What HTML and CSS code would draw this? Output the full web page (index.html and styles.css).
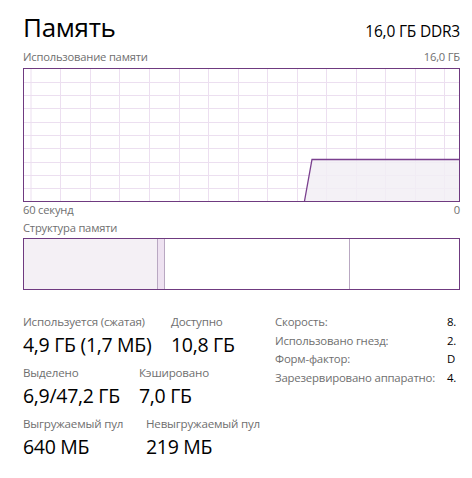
FILE: index.html
```html
<!DOCTYPE html>
<html lang="ru">
<head>
<meta charset="utf-8">
<link rel="stylesheet" href="styles.css">
</head>
<body>
<div class="page">
  <div class="header">
    <div class="title">Память</div>
    <div class="spec">16,0 ГБ DDR3</div>
  </div>
  <div class="caption-row top"><span>Использование памяти</span><span>16,0 ГБ</span></div>
  <div class="graph">
    <svg width="435" height="132" viewBox="0 0 435 132">
      <g stroke="#ecdff0" stroke-width="1">
        <line x1="7" y1="0" x2="7" y2="132"/><line x1="36.5" y1="0" x2="36.5" y2="132"/><line x1="66.5" y1="0" x2="66.5" y2="132"/><line x1="95.5" y1="0" x2="95.5" y2="132"/><line x1="125.5" y1="0" x2="125.5" y2="132"/><line x1="155.5" y1="0" x2="155.5" y2="132"/><line x1="184.5" y1="0" x2="184.5" y2="132"/><line x1="214.5" y1="0" x2="214.5" y2="132"/><line x1="243.5" y1="0" x2="243.5" y2="132"/><line x1="273.5" y1="0" x2="273.5" y2="132"/><line x1="302.5" y1="0" x2="302.5" y2="132"/><line x1="332.5" y1="0" x2="332.5" y2="132"/><line x1="361.5" y1="0" x2="361.5" y2="132"/><line x1="391.5" y1="0" x2="391.5" y2="132"/><line x1="420.5" y1="0" x2="420.5" y2="132"/>
        <line x1="0" y1="13.5" x2="435" y2="13.5"/><line x1="0" y1="26.5" x2="435" y2="26.5"/><line x1="0" y1="39.5" x2="435" y2="39.5"/><line x1="0" y1="53.5" x2="435" y2="53.5"/><line x1="0" y1="66.5" x2="435" y2="66.5"/><line x1="0" y1="79.5" x2="435" y2="79.5"/><line x1="0" y1="93.5" x2="435" y2="93.5"/><line x1="0" y1="106.5" x2="435" y2="106.5"/><line x1="0" y1="119.5" x2="435" y2="119.5"/>
      </g>
      <polygon points="280.5,132 288,90.5 435,90.5 435,132" fill="#f2eef4" fill-opacity="0.85"/>
      <polyline points="280.5,132 288,90.5 435,90.5" fill="none" stroke="#7a3f8e" stroke-width="1.3"/>
    </svg>
  </div>
  <div class="caption-row bottom"><span>60 секунд</span><span>0</span></div>
  <div class="caption-row struct"><span>Структура памяти</span></div>
  <div class="composition">
    <div class="seg inuse"></div>
    <div class="seg modified"></div>
    <div class="seg standby"></div>
    <div class="seg free"></div>
  </div>
  <div class="details">
    <div class="stats">
      <div class="stat-row">
        <div class="stat w1"><div class="label">Используется (сжатая)</div><div class="value">4,9 ГБ (1,7 МБ)</div></div>
        <div class="stat"><div class="label">Доступно</div><div class="value">10,8 ГБ</div></div>
      </div>
      <div class="stat-row">
        <div class="stat w2"><div class="label">Выделено</div><div class="value">6,9/47,2 ГБ</div></div>
        <div class="stat"><div class="label">Кэшировано</div><div class="value">7,0 ГБ</div></div>
      </div>
      <div class="stat-row">
        <div class="stat w3"><div class="label">Выгружаемый пул</div><div class="value">640 МБ</div></div>
        <div class="stat"><div class="label">Невыгружаемый пул</div><div class="value">219 МБ</div></div>
      </div>
    </div>
    <div class="props">
      <div class="prop"><span class="pname">Скорость:</span><span class="pval">8.</span></div>
      <div class="prop"><span class="pname">Использовано гнезд:</span><span class="pval">2.</span></div>
      <div class="prop"><span class="pname">Форм-фактор:</span><span class="pval">D</span></div>
      <div class="prop"><span class="pname">Зарезервировано аппаратно:</span><span class="pval">4.</span></div>
    </div>
  </div>
</div>
</body>
</html>
```
FILE: styles.css
```css
html, body {
  margin: 0;
  padding: 0;
  background: #ffffff;
}
body {
  font-family: "Open Sans", "Noto Sans", "Liberation Sans", sans-serif;
  color: #000;
  overflow: hidden;
}
.page {
  width: 437px;
  padding-left: 23px;
  padding-top: 8px;
}
.header {
  display: flex;
  justify-content: space-between;
  align-items: baseline;
  height: 38px;
}
.title {
  font-size: 26px;
  letter-spacing: -0.3px;
  line-height: 38px;
}
.spec {
  font-size: 15.5px;
  letter-spacing: -0.2px;
}
.caption-row {
  display: flex;
  justify-content: space-between;
  font-size: 11.2px;
  color: #6f6f6f;
  letter-spacing: -0.2px;
  line-height: 14px;
}
.caption-row.top { height: 18px; margin-top: 4px; }
.caption-row.bottom { margin-top: 1px; height: 16px; }
.caption-row.struct { margin-top: 2px; height: 17px; }
.graph {
  border: 1px solid #6f3a80;
  height: 132px;
  line-height: 0;
}
.graph svg { display: block; }
.composition {
  display: flex;
  border: 1px solid #6f3a80;
  height: 50px;
}
.seg { height: 100%; }
.inuse { width: 133px; background: #f4f0f5; }
.modified { width: 6px; background: #eee2f1; border-left: 1px solid #b9a8c2; border-right: 1px solid #b9a8c2; }
.standby { width: 184px; background: #fff; border-right: 1px solid #b9a8c2; }
.free { flex: 1; background: #fff; }
.details {
  display: flex;
  margin-top: 24px;
}
.stats {
  width: 252px;
}
.stat-row {
  display: flex;
  height: 51px;
}
.w1 { width: 148px; }
.w2 { width: 116px; }
.w3 { width: 123px; }
.label {
  font-size: 11.6px;
  color: #6f6f6f;
  letter-spacing: -0.2px;
  line-height: 16px;
}
.value {
  font-size: 19.5px;
  letter-spacing: -0.3px;
  line-height: 26px;
  margin-top: 2px;
}
.props {
  flex: 1;
  margin-top: -1px;
}
.prop {
  display: flex;
  font-size: 11.4px;
  line-height: 18.7px;
  letter-spacing: -0.2px;
}
.pname {
  width: 172px;
  color: #6f6f6f;
}
.pval { color: #000; }
```
